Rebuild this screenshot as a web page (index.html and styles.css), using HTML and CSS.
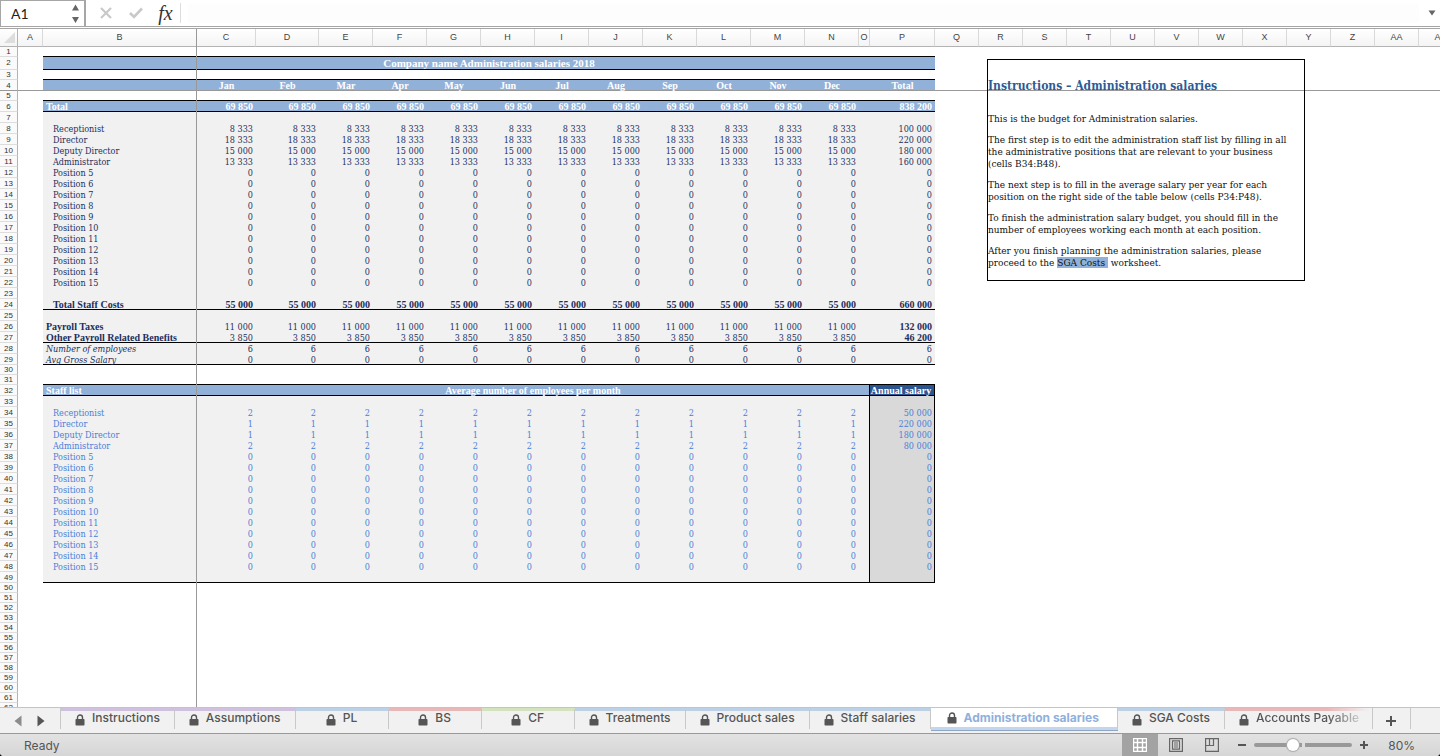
FILE: index.html
```html
<!DOCTYPE html>
<html lang="en">
<head>
    <meta charset="utf-8">
    <title>Administration salaries</title>
    <link rel="stylesheet" href="styles.css">
</head>
<body>
    <div class="app">
        <!-- Formula bar -->
        <header class="formula-bar">
            <div class="name-box">
                <input type="text" class="name-input" value="A1" aria-label="Name box">
                <svg class="stepper" width="9" height="20" viewBox="0 0 9 20" fill="#666"><path d="M4.500 0.500L8 6.500H1zM4.500 19L8 13H1z"/></svg>
            </div>
            <button class="bar-btn" aria-label="Cancel"><svg width="12" height="12" viewBox="0 0 12 12" stroke="#c9c9c9" stroke-width="2.200"><path d="M1 1L11 11M11 1L1 11"/></svg></button>
            <button class="bar-btn" aria-label="Enter"><svg width="14" height="12" viewBox="0 0 14 12" fill="none" stroke="#c9c9c9" stroke-width="2.600"><path d="M1 6L5 10L13 1.500"/></svg></button>
            <button class="bar-btn fx" aria-label="Insert function">fx</button>
            <input type="text" class="formula-input" aria-label="Formula">
            <button class="expand" aria-label="Expand formula bar"><svg width="8" height="6" viewBox="0 0 8 6" fill="#666"><path d="M0.500 0.500H7.500L4 5.500z"/></svg></button>
        </header>

        <!-- Sheet, rows are built in script.js -->
        <main class="sheet">
            <table class="grid" id="grid"></table>
            <div class="freeze-line"></div>
            <aside class="note">
                <h1>Instructions – Administration salaries</h1>
                <p>This is the budget for Administration salaries.</p>
                <p>The first step is to edit the administration staff list by filling in all<br>the administrative positions that are relevant to your business<br>(cells B34:B48).</p>
                <p>The next step is to fill in the average salary per year for each<br>position on the right side of the table below (cells P34:P48).</p>
                <p>To finish the administration salary budget, you should fill in the<br>number of employees working each month at each position.</p>
                <p>After you finish planning the administration salaries, please<br>proceed to the <a href="#sga">SGA Costs&nbsp;</a> worksheet.</p>
            </aside>
        </main>

        <!-- Sheet tabs -->
        <nav class="tabs">
            <div class="tab-nav">
                <button aria-label="Previous sheet"><svg width="8" height="12" viewBox="0 0 8 12" fill="#8c8c8c"><path d="M7.500 0.500V11.500L0.500 6z"/></svg></button>
                <button aria-label="Next sheet"><svg width="8" height="12" viewBox="0 0 8 12" fill="#555"><path d="M0.500 0.500V11.500L7.500 6z"/></svg></button>
            </div>
            <div class="tab-list" id="tabs"></div>
            <button class="add-tab" aria-label="Add sheet"><svg width="10" height="10" viewBox="0 0 10 10" stroke="#555" stroke-width="2"><path d="M5 0V10M0 5H10"/></svg></button>
        </nav>

        <!-- Status bar -->
        <footer class="status-bar">
            <span class="ready">Ready</span>
            <button class="view active" aria-label="Normal view"><svg width="14" height="14" viewBox="0 0 14 14" fill="none" stroke="#fff"><path d="M0.500 0.500H13.500V13.500H0.500zM4.500 0V14M9.500 0V14M0 4.500H14M0 9.500H14" stroke-width="1.400"/></svg></button>
            <button class="view" aria-label="Page layout"><svg width="14" height="14" viewBox="0 0 14 14" fill="none" stroke="#666" stroke-width="1.200"><path d="M0.600 0.600H13.400V13.400H0.600zM3.500 2.800H10.500V11.200H3.500zM5 5H9M5 7H9M5 9H9"/></svg></button>
            <button class="view" aria-label="Page break preview"><svg width="14" height="14" viewBox="0 0 14 14" fill="none" stroke="#666" stroke-width="1.200"><path d="M0.600 0.600H13.400V13.400H0.600zM0.600 7.500H8.500V0.600M4.500 0.600V7.500"/></svg></button>
            <button class="zoom-btn" aria-label="Zoom out"><svg width="8" height="8" viewBox="0 0 8 8" stroke="#555" stroke-width="2"><path d="M0 4H8"/></svg></button>
            <input type="range" class="zoom" min="0" max="100" value="38" aria-label="Zoom">
            <button class="zoom-btn" aria-label="Zoom in"><svg width="8" height="8" viewBox="0 0 8 8" stroke="#555" stroke-width="2"><path d="M4 0V8M0 4H8"/></svg></button>
            <span class="percent">80%</span>
        </footer>
    </div>
    <script src="script.js"></script>
</body>
</html>
```

FILE: styles.css
```css
:root {
    --band: #92b1d9;
    --band-dark: #2b5591;
    --cell: #f1f1f1;
    --navy: #1b2f5c;
    --input: #4a80d8;
    --line: #999;
    --ui: #555;
}

* {
    box-sizing: border-box;
}

body {
    margin: 0;
    background: #111;
    font-family: "Liberation Sans", Arial, sans-serif;
}

button {
    display: flex;
    align-items: center;
    justify-content: center;
    border: 0;
    padding: 0;
    background: none;
}

input {
    border: 0;
    outline: none;
}

.app {
    display: flex;
    flex-direction: column;
    height: 100vh;
    overflow: hidden;
    background: #fff;
    border-radius: 0 0 4px 4px;
}

/* Formula bar */
.formula-bar {
    display: flex;
    align-items: center;
    height: 29px;
    flex: none;
    padding-bottom: 2px;
    border-bottom: 1px solid #a6a6a6;
    box-shadow: inset 0 -1px #fff, inset 0 -2px #a6a6a6;
}

.name-box {
    display: flex;
    align-items: center;
    width: 86px;
    height: 26px;
    padding: 0 4px 0 10px;
    border: 1px solid #a6a6a6;
    border-right-width: 2px;
    border-bottom: 0;
}

.name-input {
    flex: 1;
    width: 20px;
    padding: 0;
    font: 14px Lato, sans-serif;
    color: #222;
}

.bar-btn {
    width: 30px;
    height: 20px;
}

.bar-btn:nth-child(2) {
    margin-left: 5px;
}

.fx {
    font: italic 20px "Liberation Serif", serif;
    color: #333;
    border-right: 1px solid #ddd;
}

.formula-input {
    flex: 1;
    height: 19px;
    margin-left: 7px;
    background: #fdfdfd;
}

.expand {
    width: 16px;
    margin-left: 5px;
}

/* Sheet */
.sheet {
    position: relative;
    flex: 1;
    min-height: 0;
    overflow: hidden;
}

.grid {
    table-layout: fixed;
    width: 100%;
    border-spacing: 0;
    font: 9px/8px "DejaVu Serif Condensed", "DejaVu Serif", serif;
    color: var(--navy);
}

.grid th,
.grid td {
    padding: 2px 0 0;
    border-bottom: 1px solid transparent;
    white-space: nowrap;
}

.w-head { width: 18px; }
.w-a { width: 25px; }
.w-b { width: 154px; }
.w-c { width: 59px; }
.w-d { width: 63px; }
.w-month { width: 54px; }
.w-o { width: 11px; }
.w-p { width: 65px; }
.w-std { width: 44px; }

.grid thead th {
    height: 18px;
    padding: 0;
    font: 9px/17px "Liberation Sans", Arial, sans-serif;
    color: #444;
    background: linear-gradient(#fff, #f4f4f4);
    border-right: 1px solid #d9d9d9;
    border-bottom-color: #b3b3b3;
}

.grid thead th.corner {
    padding-left: 4px;
    border-right-color: #b3b3b3;
}

.corner svg {
    display: block;
}

.grid tbody th {
    padding-top: 1px;
    font: 8px/9px "Liberation Sans", Arial, sans-serif;
    color: #333;
    background: #fafafa;
    border-right: 1px solid #b3b3b3;
    border-bottom-color: #ddd;
}

.grid .band .in,
.grid .bold .in,
.grid .bold-label .label,
.grid .bold-label .total {
    padding-top: 1px;
    font: bold 10px/9px "Liberation Serif", serif;
}

.grid .short th,
.grid .short td {
    padding-top: 0;
    line-height: 9px;
}

.grid .tall th,
.grid .tall .in {
    padding-top: 0;
    line-height: 12px;
}

.grid .frozen th,
.grid .frozen td {
    border-bottom-color: var(--line);
}

.grid .ruled .in {
    border-bottom-color: #000;
}

.in { text-align: right; }
.grid .num { padding-right: 3px; }
.grid .label { text-align: left; padding-left: 3px; }
.grid .indent { padding-left: 10px; }
.grid .center { text-align: center; }

.fill .in { background: var(--cell); }

.band .in {
    background: var(--band);
    color: #fff;
}

.grid .title .in { font-size: 11px; }
.italic .label { font-style: italic; }
.entry .in { color: var(--input); }

/* no bottom border here, it would notch the vertical rules */
.grid .staff:not(.ruled) .in {
    border-bottom: 0;
    padding-bottom: 1px;
}

.staff .edge { border-right: 1px solid #000; }
.staff .total { border-right: 1px solid #000; background: #d9d9d9; }
.staff.band .total { background: var(--band-dark); }
.grid .staff .total { padding-right: 2px; }

.freeze-line {
    position: absolute;
    top: 0;
    bottom: 0;
    left: 196px;
    width: 1px;
    background: var(--line);
}

/* Text box floating over the grid */
.note {
    position: absolute;
    top: 30px;
    left: 987px;
    width: 318px;
    height: 222px;
    padding-top: 20px;
    border: 1px solid #000;
    font: 10px/12px "DejaVu Serif Condensed", "DejaVu Serif", serif;
    color: #111;
    white-space: nowrap;
}

.note h1 {
    margin: 0 0 21px;
    font-size: 12px;
    line-height: 12px;
    color: #2e5b97;
}

.note p {
    margin: 0 0 9px;
}

.note a {
    color: inherit;
    text-decoration: none;
    background: var(--band);
}

/* Tabs */
.tabs {
    display: flex;
    flex: none;
    height: 27px;
    background: #f1f1f1;
    border-top: 1px solid #c4c4c4;
    border-bottom: 1px solid #999;
}

.tab-nav {
    display: flex;
    align-items: center;
    gap: 15px;
    width: 60px;
    padding-left: 14px;
}

.tab-list {
    display: flex;
    border-left: 1px solid #c8c8c8;
    height: 21px;
}

.tab {
    display: flex;
    align-items: center;
    justify-content: center;
    gap: 7px;
    min-width: 93px;
    height: 21px;
    padding: 0 14px;
    border-top: 3px solid #bcd0e6;
    border-right: 1px solid #c8c8c8;
    font: 500 12px Inter, sans-serif;
    color: var(--ui);
    white-space: nowrap;
}

.tab span { line-height: 14px; padding-bottom: 4px; }

.purple { border-top-color: #cfc1dd; }
.red { border-top-color: #e8b8b8; }
.green { border-top-color: #d3e3bd; }

.tab.current {
    height: 22px;
    padding: 0 18px 0 16px;
    border-top: 0;
    border-bottom: 3px solid #c3d6ec;
    background: #fff;
    box-shadow: 0 1px #8fa6c4;
    color: #8fb0dc;
    font-weight: 700;
}

.tab.current span { padding-bottom: 0; }

.tab:last-child {
    padding-right: 13px;
    border-right: 0;
    mask-image: linear-gradient(to right, #000 70%, transparent 98%);
}

.add-tab {
    width: 39px;
    height: 21px;
    padding-top: 4px;
    border-left: 1px solid #c8c8c8;
    border-right: 1px solid #c8c8c8;
}

/* Status bar */
.status-bar {
    display: flex;
    align-items: center;
    flex: none;
    height: 22px;
    padding-right: 25px;
    background: linear-gradient(#e2e2e2, #d6d6d6);
    color: var(--ui);
    font: 12px Inter, sans-serif;
}

.ready {
    flex: 1;
    padding-left: 24px;
}

.view {
    width: 36px;
    height: 22px;
}

.view.active { background: #a3a3a3; }

.zoom-btn {
    width: 8px;
    height: 22px;
}

.view + .zoom-btn { margin-left: 8px; }

.zoom {
    width: 98px;
    height: 12px;
    margin: 0 8px;
    appearance: none;
    background: none;
}

.zoom::-webkit-slider-runnable-track {
    height: 4px;
    border-radius: 2px;
    background: linear-gradient(to right, #999 48px, #ddd 48px, #ddd 51px, #999 51px);
}

.zoom::-webkit-slider-thumb {
    appearance: none;
    width: 12px;
    height: 12px;
    margin-top: -4px;
    border-radius: 50%;
    background: #fff;
    box-shadow: 0 0 1px 1px #aaa;
}

.percent {
    margin-left: 20px;
}
```

FILE: script.js
```js
const months = ['Jan', 'Feb', 'Mar', 'Apr', 'May', 'Jun', 'Jul', 'Aug', 'Sep', 'Oct', 'Nov', 'Dec'];
const staff = ['Receptionist', 'Director', 'Deputy Director', 'Administrator'];
for (let i = 5; i <= 15; i++) staff.push(`Position ${i}`);

const monthly = ['8 333', '18 333', '15 000', '13 333'];
const yearly = ['100 000', '220 000', '180 000', '160 000'];
const heads = ['2', '1', '1', '2'];
const salaries = ['50 000', '220 000', '180 000', '80 000'];

// row number -> { cls, label, value, total }
const rows = {
    1: { cls: 'short ruled' },
    2: { cls: 'tall band title ruled', html: '<td></td><td class="in center" colspan="15">Company name Administration salaries 2018</td>' },
    3: { cls: 'short ruled' },
    4: { cls: 'band frozen', values: months, total: 'Total', center: true },
    5: { cls: 'short ruled' },
    6: { cls: 'band ruled', label: 'Total', value: '69 850', total: '838 200' },
    24: { cls: 'fill bold ruled', label: 'Total Staff Costs', indent: true, value: '55 000', total: '660 000' },
    26: { cls: 'fill bold-label', label: 'Payroll Taxes', value: '11 000', total: '132 000' },
    27: { cls: 'fill bold-label ruled', label: 'Other Payroll Related Benefits', value: '3 850', total: '46 200' },
    28: { cls: 'fill italic', label: 'Number of employees', value: '6', total: '6' },
    29: { cls: 'fill italic ruled', label: 'Avg Gross Salary', value: '0', total: '0' },
    30: { cls: 'short' },
    31: { cls: 'short ruled' },
    32: { cls: 'band staff ruled', html: '<td></td><td class="in label">Staff list</td><td class="in center edge" colspan="13">Average number of employees per month</td><td class="in center total">Annual salary</td>' },
    33: { cls: 'fill staff' },
    49: { cls: 'fill staff ruled' }
};
[7, 23, 25].forEach(n => rows[n] = { cls: 'fill' });
staff.forEach((name, i) => {
    rows[8 + i] = { cls: 'fill', label: name, indent: true, value: monthly[i] || '0', total: yearly[i] || '0' };
    rows[34 + i] = { cls: 'fill staff entry', label: name, indent: true, value: heads[i] || '0', total: salaries[i] || '0' };
});

function buildRow(n) {
    const r = rows[n] || { cls: 'short' };
    let cells = r.html;
    if (!cells) {
        const align = r.center ? 'center' : 'num';
        cells = `<td></td><td class="in label${r.indent ? ' indent' : ''}">${r.label || ''}</td>`;
        months.forEach((m, i) => {
            cells += `<td class="in ${align}">${r.values ? r.values[i] : r.value || ''}</td>`;
        });
        cells += `<td class="in edge"></td><td class="in ${align} total">${r.total || ''}</td>`;
    }
    return `<tr class="${r.cls}"><th>${n}</th>${cells}<td colspan="12"></td></tr>`;
}

function buildGrid() {
    const widths = ['head', 'a', 'b', 'c', 'd', ...Array(10).fill('month'), 'o', 'p', ...Array(12).fill('std')];
    const letters = [...'ABCDEFGHIJKLMNOPQRSTUVWXYZ', 'AA', 'AB'];
    let html = '<colgroup>' + widths.map(w => `<col class="w-${w}">`).join('') + '</colgroup>';
    html += '<thead><tr><th class="corner"><svg width="11" height="11" viewBox="0 0 11 11" fill="#ddd"><path d="M11 0V11H0z"/></svg></th>';
    html += letters.map(l => `<th>${l}</th>`).join('') + '</tr></thead><tbody>';
    for (let n = 1; n <= 62; n++) html += buildRow(n);
    document.getElementById('grid').innerHTML = html + '</tbody>';
}

const tabs = [
    ['Instructions', 'purple'], ['Assumptions', 'purple'], ['PL', ''], ['BS', 'red'], ['CF', 'green'],
    ['Treatments', ''], ['Product sales', ''], ['Staff salaries', ''], ['Administration salaries', 'current'],
    ['SGA Costs', ''], ['Accounts Payable', 'red']
];
const lock = '<svg width="10" height="12" viewBox="0 0 10 12"><path d="M2.500 6V3.500a2.500 2.500 0 0 1 5 0V6" fill="none" stroke="#555" stroke-width="1.400"/><rect x="0.500" y="5" width="9" height="6.500" rx="0.800" fill="#555"/></svg>';

function buildTabs() {
    document.getElementById('tabs').innerHTML = tabs.map(([name, cls]) =>
        `<button class="tab ${cls}">${lock}<span>${name}</span></button>`).join('');
}

buildGrid();
buildTabs();
```
